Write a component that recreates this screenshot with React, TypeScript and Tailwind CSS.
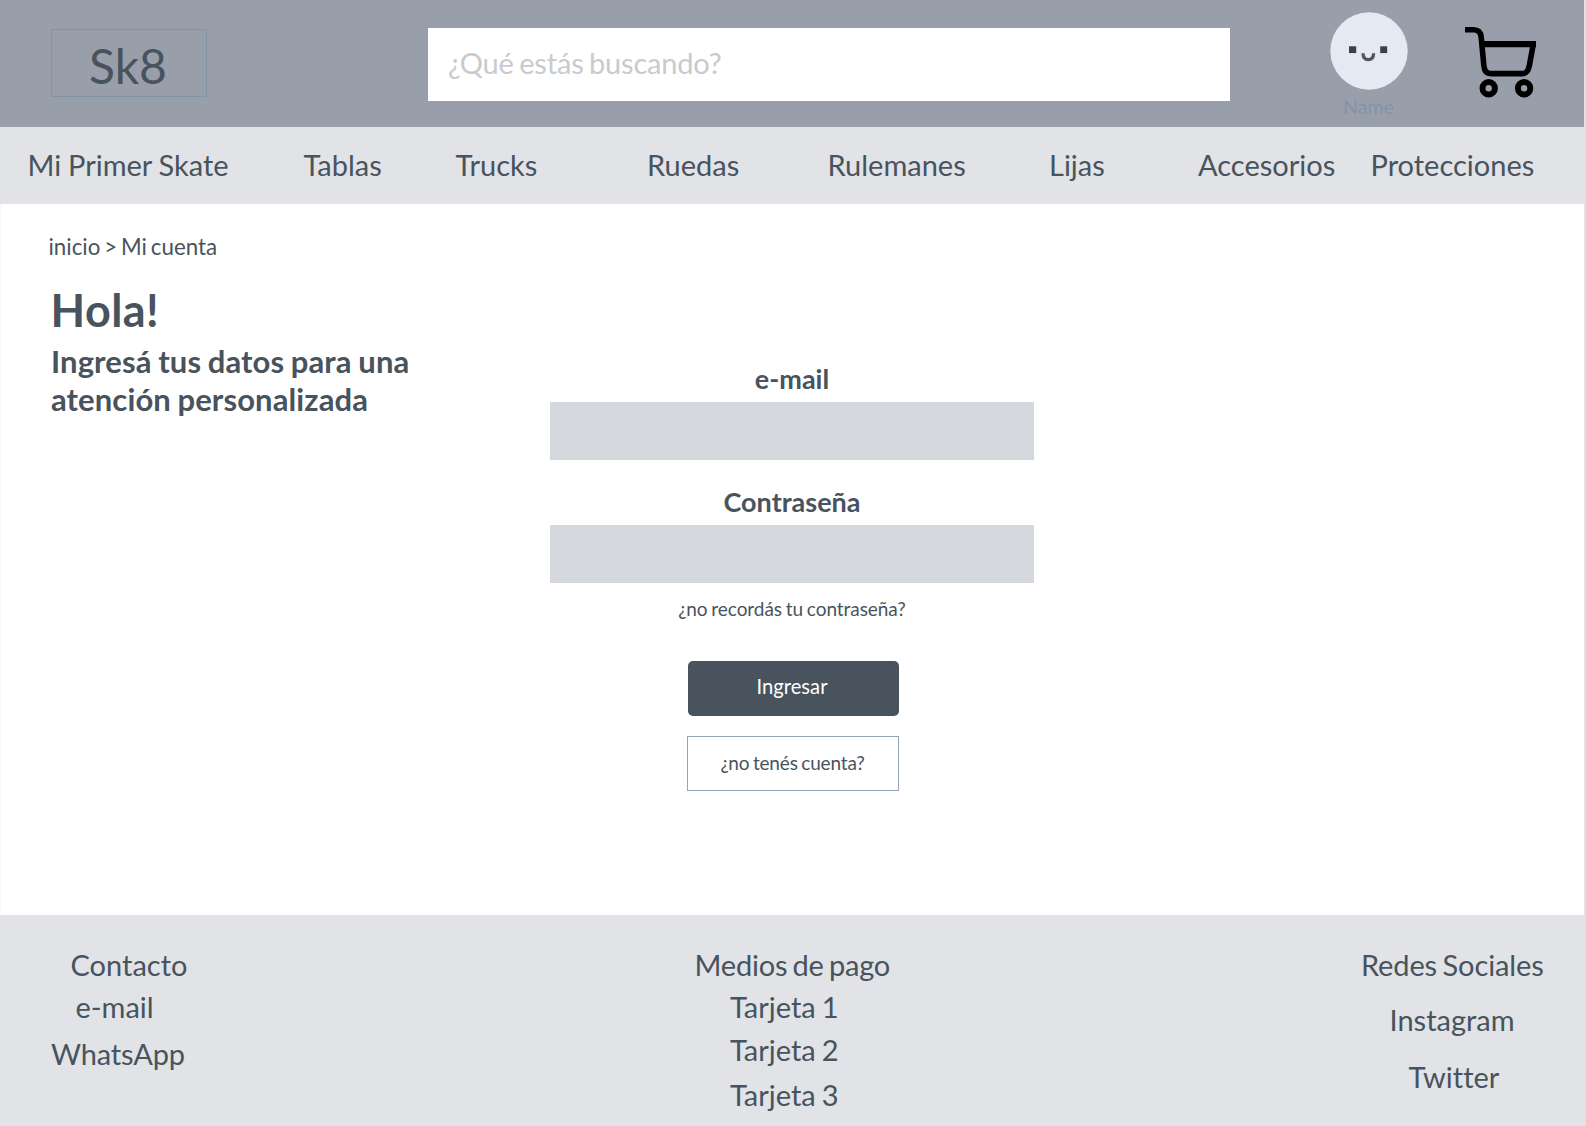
import React from "react";

const navItems = [
  "Mi Primer Skate",
  "Tablas",
  "Trucks",
  "Ruedas",
  "Rulemanes",
  "Lijas",
  "Accesorios",
  "Protecciones",
];

function Avatar() {
  return (
    <svg className="block h-[78px] w-[78px]" viewBox="0 0 78 78">
      <circle cx="39" cy="39" r="38.7" fill="#e4e9f2" />
      <rect x="19" y="34.3" width="7.2" height="6.8" fill="#3f4044" />
      <rect x="50.2" y="34.3" width="7" height="6.8" fill="#3f4044" />
      <path d="M33 41.2c0 4.200 2.200 6.400 5.300 6.400s5.300-2.200 5.300-6.400" fill="none" stroke="#55565c" strokeWidth="3.200" />
    </svg>
  );
}

function CartIcon() {
  return (
    <svg className="block h-[71px] w-[71px]" viewBox="0 0 71 71" fill="none" stroke="#000" strokeWidth="5.600">
      <path d="M0 2.800h8.500c5 0 7.300 2.500 7.700 7.500l2.700 28.600c.5 5 2.500 7.700 6.800 7.700h31.500c4.300 0 6-2.700 7-7.200l4.100-22.500" />
      <path d="M17 17.200h54" strokeWidth="6.200" />
      <circle cx="23.700" cy="61.300" r="6.200" strokeWidth="6" />
      <circle cx="59.100" cy="61.300" r="6.200" strokeWidth="6" />
    </svg>
  );
}

export default function App() {
  return (
    <div className="flex h-[1126px] w-[1586px] flex-col overflow-hidden bg-[#e1e3e7] font-['Lato',sans-serif] text-[29px] leading-9 text-[#48535d] [font-variant-ligatures:none]">
      <header className="flex h-[127px] w-[1584px] shrink-0 items-start bg-[#989faa]">
        <div className="mt-[29px] ml-[51px] flex h-[68px] w-[156px] items-center justify-center border border-[#8494a8] pt-[5px] pr-[2px] text-[48px] leading-none">
          Sk8
        </div>
        <div className="mt-7 ml-[221px] flex h-[72.500px] w-[802px] items-center bg-white pb-[3px] pl-5 tracking-[-0.180px] text-[#c8cbce] [word-spacing:-1.800px]">
          ¿Qué estás buscando?
        </div>
        <div className="mt-3 ml-[100px] flex w-[78px] flex-col items-center">
          <Avatar />
          <span className="mt-[5px] mr-[1px] text-[19.700px] leading-6 text-[#8393a7]">Name</span>
        </div>
        <div className="mt-[27px] ml-[57px]">
          <CartIcon />
        </div>
      </header>

      <nav className="grid h-[77px] shrink-0 grid-cols-[276px_152px_191.500px_180.500px_221.500px_149px_172.500px_1fr] items-center pb-[2px] pl-[27.500px] whitespace-nowrap [word-spacing:-0.600px]">
        {navItems.map((item) => (
          <a key={item}>{item}</a>
        ))}
      </nav>

      <main className="flex h-[711px] w-[1584px] shrink-0 items-start border-l border-[#f6f7f8] bg-white">
        <section className="w-[549px] pl-[47.500px]">
          <p className="mt-[31px] text-[22.300px] leading-6 [word-spacing:-1.800px]">inicio &gt; Mi cuenta</p>
          <h1 className="mt-[35px] ml-[2px] text-[45px] leading-[32px] font-bold tracking-[0.400px]">Hola!</h1>
          <p className="mt-[16px] ml-[2.500px] text-[31px] leading-[38px] font-bold tracking-[0.100px] [word-spacing:-1px]">
            Ingresá tus datos para una
            <br />
            atención personalizada
          </p>
        </section>
        <form className="flex w-[484px] flex-col items-center pt-[159px]">
          <label className="text-[27px] leading-8 font-bold">e-mail</label>
          <div className="mt-[7px] h-[58px] w-full bg-[#d5d9de]" />
          <label className="mt-[26px] text-[27px] leading-8 font-bold">Contraseña</label>
          <div className="mt-[7px] h-[58px] w-full bg-[#d5d9de]" />
          <a className="mt-[14px] text-[19px] leading-6 tracking-[-0.060px] [word-spacing:-1px]">¿no recordás tu contraseña?</a>
          <button type="button" className="mt-[40px] ml-[2px] h-[55px] w-[211px] rounded-[5px] bg-[#48535d] pr-[2px] pb-1.5 text-[20.200px] leading-6 text-white">
            Ingresar
          </button>
          <button type="button" className="mt-5 ml-[1px] h-[55px] w-[212px] border border-[#94a3b5] pb-[1px] text-[19px] leading-6 tracking-[-0.160px] [word-spacing:-1.200px]">
            ¿no tenés cuenta?
          </button>
        </form>
      </main>

      <footer className="grid flex-1 grid-cols-[695px_666px_1fr] items-start whitespace-nowrap">
        <div className="flex flex-col items-start pt-[32px]">
          <h2 className="ml-[70.500px]">Contacto</h2>
          <p className="mt-[6px] ml-[75.500px]">e-mail</p>
          <p className="mt-[11px] ml-[51px] tracking-[-0.150px]">WhatsApp</p>
        </div>
        <div className="flex flex-col items-start pt-[32px]">
          <h2 className="-ml-[0.500px] tracking-[-0.200px] [word-spacing:-2px]">Medios de pago</h2>
          <p className="mt-[6px] ml-[35px] [word-spacing:-1.500px]">Tarjeta 1</p>
          <p className="mt-[7px] ml-[35px] [word-spacing:-1.500px]">Tarjeta 2</p>
          <p className="mt-[9px] ml-[35px] [word-spacing:-1.500px]">Tarjeta 3</p>
        </div>
        <div className="flex flex-col items-start pt-[32px]">
          <h2 className="tracking-[-0.120px] [word-spacing:-1.800px]">Redes Sociales</h2>
          <p className="mt-[19px] ml-[28.500px]">Instagram</p>
          <p className="mt-[21px] ml-[47.500px]">Twitter</p>
        </div>
      </footer>
    </div>
  );
}
